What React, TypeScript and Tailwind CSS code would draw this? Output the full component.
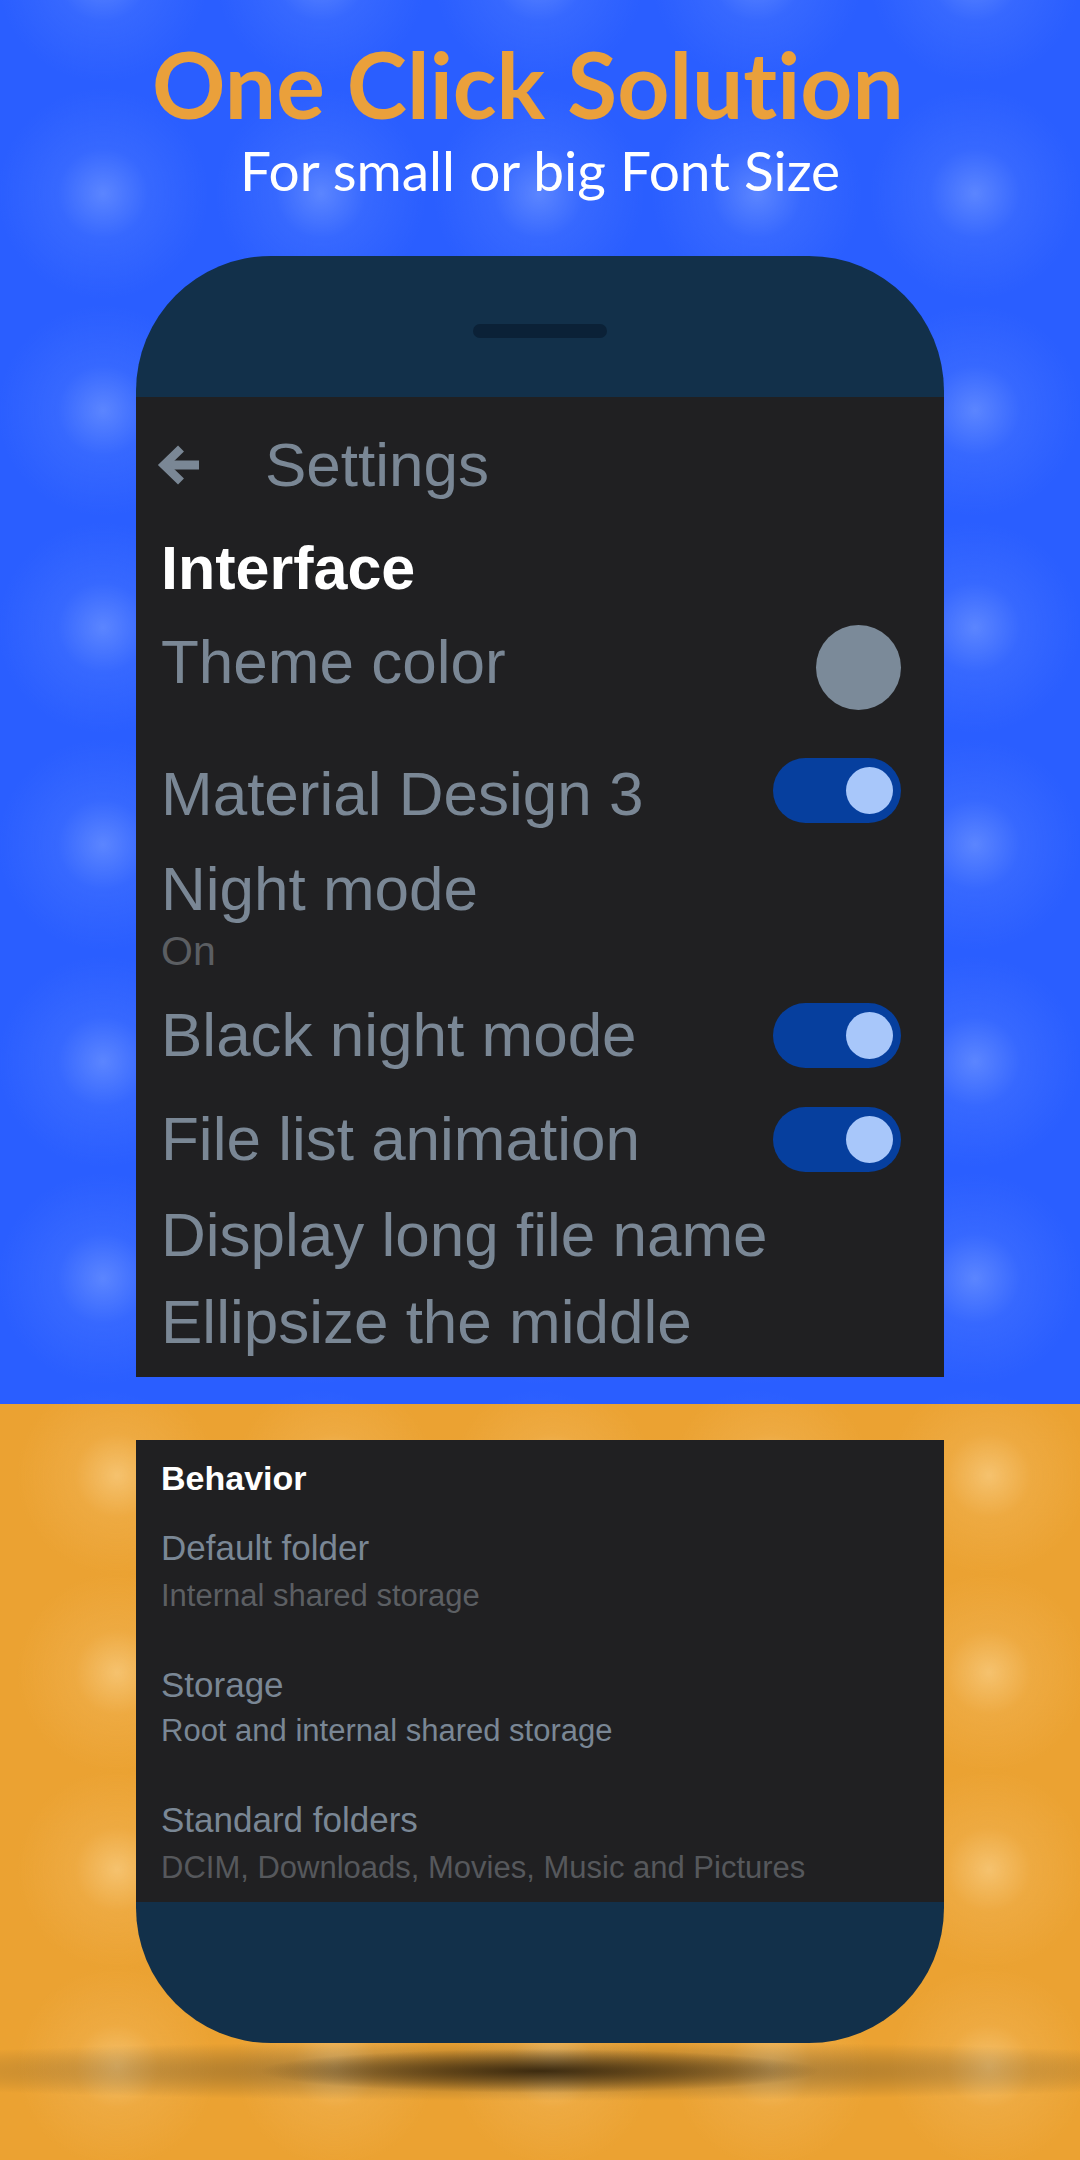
import React from "react";

const slate = "text-[#7a8795]";

const Toggle = ({ className = "" }: { className?: string }) => (
  <div className={`flex h-[65px] w-[128px] shrink-0 items-center justify-end rounded-full bg-[#063f9e] pr-[8px] ${className}`}>
    <div className="h-[47px] w-[47px] rounded-full bg-[#a8c7fa]" />
  </div>
);

const Row = ({ label, className = "", children }: { label: string; className?: string; children?: React.ReactNode }) => (
  <div className={`flex h-[70px] items-center justify-between text-[62px] leading-[70px] ${slate} ${className}`}>
    <span className="whitespace-nowrap">{label}</span>
    {children}
  </div>
);

const BackArrow = () => (
  <svg width="42" height="42" viewBox="0 0 42 42" className="-ml-[4px] shrink-0">
    <path d="M6 21 H42" stroke="#7a8795" strokeWidth="9" fill="none" />
    <path d="M24 4.5 L7 21 L24 37.5" stroke="#7a8795" strokeWidth="8.5" fill="none" strokeLinejoin="miter" />
  </svg>
);

export default function App() {
  return (
    <div className="flex h-[2160px] w-[1080px] flex-col overflow-hidden font-['Liberation_Sans',Arial,sans-serif]">
      {/* blue half */}
      <section className="flex h-[1404px] shrink-0 flex-col items-center bg-[#2a5eff] bg-[radial-gradient(circle_at_center,rgba(140,172,255,0.5)_0,rgba(100,140,255,0.22)_45px,rgba(42,94,255,0)_105px)] bg-[length:218px_217px] bg-[position:-6px_85px] pt-[38px]">
        <h1 className="mr-[24px] font-['Lato',sans-serif] text-[91px] font-bold leading-none text-[#eaa03b] [font-variant-ligatures:none]">
          One Click Solution
        </h1>
        <p className="mt-[14px] font-['Lato',sans-serif] text-[55px] leading-none text-white [font-variant-ligatures:none]">
          For small or big Font Size
        </p>

        <div className="mt-[58px] w-[808px] overflow-hidden rounded-t-[135px]">
          <div className="flex h-[141px] justify-center bg-[#12304a] pt-[68px]">
            <div className="h-[14px] w-[134px] rounded-full bg-[#0b2137]" />
          </div>
          <div className="h-[980px] bg-[#202022] pb-[19px] pl-[25px] pr-[43px] pt-[18px]">
            <div className={`flex h-[100px] items-center text-[62px] leading-[100px] ${slate}`}>
              <BackArrow />
              <span className="ml-[66px]">Settings</span>
            </div>
            <div className="mt-[18px] text-[61px] font-bold leading-[70px] text-white">Interface</div>
            <Row label="Theme color" className="mt-[24px]">
              <div className="mt-[10px] h-[85px] w-[85px] rounded-full bg-[#7b8a99]" />
            </Row>
            <Row label="Material Design 3" className="mt-[62px]">
              <Toggle className="mb-[7px]" />
            </Row>
            <Row label="Night mode" className="mt-[25px]" />
            <div className="mt-[3px] text-[41px] leading-[48px] text-[#5b5e62]">On</div>
            <Row label="Black night mode" className="mt-[25px]">
              <Toggle />
            </Row>
            <Row label="File list animation" className="mt-[34px]">
              <Toggle />
            </Row>
            <Row label="Display long file name" className="mt-[26px]" />
            <Row label="Ellipsize the middle" className="mt-[17px]" />
          </div>
        </div>
      </section>

      {/* orange half */}
      <section className="flex h-[756px] shrink-0 flex-col items-center bg-[#eba232] bg-[radial-gradient(circle_at_center,rgba(252,215,150,0.6)_0,rgba(245,190,105,0.28)_42px,rgba(235,162,50,0)_100px)] bg-[length:218px_197px] bg-[position:8px_-27px] pt-[36px]">
        <div className="w-[808px] overflow-hidden rounded-b-[135px]">
          <div className="h-[462px] bg-[#202022] pl-[25px] pt-[18px]">
            <div className="text-[34px] font-bold leading-[40px] text-white">Behavior</div>
            <div className={`mt-[29px] text-[35px] leading-[42px] ${slate}`}>Default folder</div>
            <div className="mt-[8px] text-[31px] leading-[38px] text-[#5c5f63]">Internal shared storage</div>
            <div className={`mt-[49px] text-[35px] leading-[42px] ${slate}`}>Storage</div>
            <div className={`mt-[6px] text-[31px] leading-[38px] ${slate}`}>Root and internal shared storage</div>
            <div className={`mt-[49px] text-[35px] leading-[42px] ${slate}`}>Standard folders</div>
            <div className="mt-[8px] text-[31px] leading-[38px] text-[#56585c]">DCIM, Downloads, Movies, Music and Pictures</div>
          </div>
          <div className="h-[141px] bg-[#12304a]" />
        </div>
        <div className="h-[72px] w-full bg-[radial-gradient(ellipse_280px_22px_at_50%_28px,rgba(45,30,8,0.85),rgba(45,30,8,0)),radial-gradient(ellipse_780px_30px_at_50%_28px,rgba(95,75,40,0.6),rgba(95,75,40,0))]" />
      </section>
    </div>
  );
}
